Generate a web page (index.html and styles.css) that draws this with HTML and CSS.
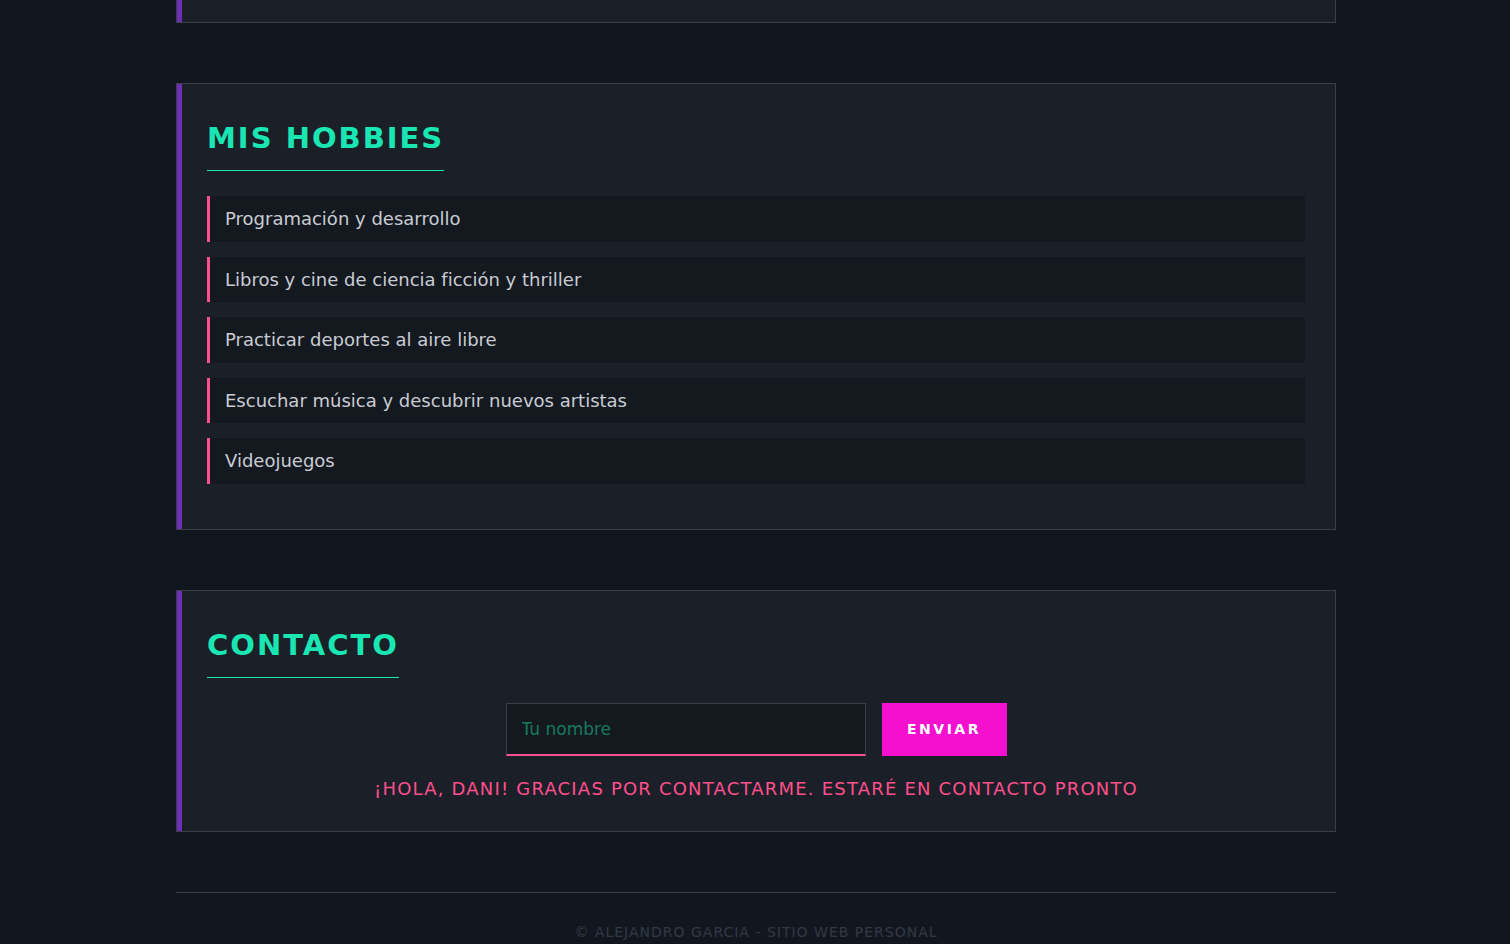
FILE: index.html
```html
<!DOCTYPE html>
<html lang="es">
<head>
<meta charset="utf-8">
<title>Alejandro Garcia</title>
<link rel="stylesheet" href="styles.css">
</head>
<body>
<main class="page">
  <section class="card card-stub"></section>

  <section class="card">
    <h2 class="card-title">Mis hobbies</h2>
    <ul class="hobbies">
      <li class="hobby">Programación y desarrollo</li>
      <li class="hobby">Libros y cine de ciencia ficción y thriller</li>
      <li class="hobby">Practicar deportes al aire libre</li>
      <li class="hobby">Escuchar música y descubrir nuevos artistas</li>
      <li class="hobby">Videojuegos</li>
    </ul>
  </section>

  <section class="card">
    <h2 class="card-title">Contacto</h2>
    <form class="contact-form">
      <input class="name-input" type="text" placeholder="Tu nombre">
      <button class="send-btn" type="button">Enviar</button>
    </form>
    <p class="contact-msg">¡Hola, Dani! Gracias por contactarme. Estaré en contacto pronto</p>
  </section>

  <footer class="footer">© Alejandro Garcia - Sitio web personal</footer>
</main>
</body>
</html>
```

FILE: styles.css
```css
* { box-sizing: border-box; }

html, body {
  margin: 0;
  padding: 0;
  background: #12171f;
}

body {
  font-family: "DejaVu Sans", "Liberation Sans", sans-serif;
  color: #c9ccd2;
  overflow: hidden;
}

.page {
  width: 1160px;
  margin: 0 0 0 calc(50% - 579px);
  display: flex;
  flex-direction: column;
  gap: 60px;
}

.card {
  background: #1b1f28;
  border: 1px solid #3b3e47;
  box-shadow: inset 5px 0 0 #6c2fb6;
  padding: 30px 30px 30px 30px;
}

.card-stub {
  height: 23px;
  border-top: none;
  padding: 0;
}

.card-title {
  display: inline-block;
  margin: 0 0 25px 0;
  padding: 7px 0 15px 0;
  font-size: 29px;
  line-height: 34px;
  font-weight: bold;
  letter-spacing: 2px;
  text-transform: uppercase;
  color: #1ae6b4;
  border-bottom: 1px solid #1ae6b4;
}

.hobbies {
  list-style: none;
  margin: 0 0 15px 0;
  padding: 0;
  display: flex;
  flex-direction: column;
  gap: 15px;
}

.hobby {
  background: #141920;
  border-left: 3px solid #ff4f8c;
  padding: 12px 15px;
  font-size: 18px;
  line-height: 21.5px;
  color: #c9ccd2;
}

.contact-form {
  display: flex;
  justify-content: center;
  gap: 16px;
  margin: 0;
}

.name-input {
  width: 360px;
  height: 53px;
  background: #141920;
  border: 1px solid #3b3e47;
  border-bottom: 2px solid #ff4f8c;
  padding: 0 15px;
  font-family: inherit;
  font-size: 17px;
  color: #c9ccd2;
  outline: none;
}

.name-input::placeholder {
  color: #177a5c;
}

.send-btn {
  width: 125px;
  height: 53px;
  background: #f50fcf;
  border: none;
  color: #ffffff;
  font-family: inherit;
  font-size: 14px;
  font-weight: bold;
  letter-spacing: 2.5px;
  text-transform: uppercase;
}

.contact-msg {
  margin: 22px 0 1px 0;
  text-align: center;
  font-size: 18px;
  line-height: 22px;
  letter-spacing: 1.2px;
  text-transform: uppercase;
  color: #ff4f8c;
}

.footer {
  border-top: 1px solid #3b3e47;
  padding: 31px 0 10px;
  text-align: center;
  font-size: 14px;
  letter-spacing: 1px;
  text-transform: uppercase;
  color: #333944;
}
```
